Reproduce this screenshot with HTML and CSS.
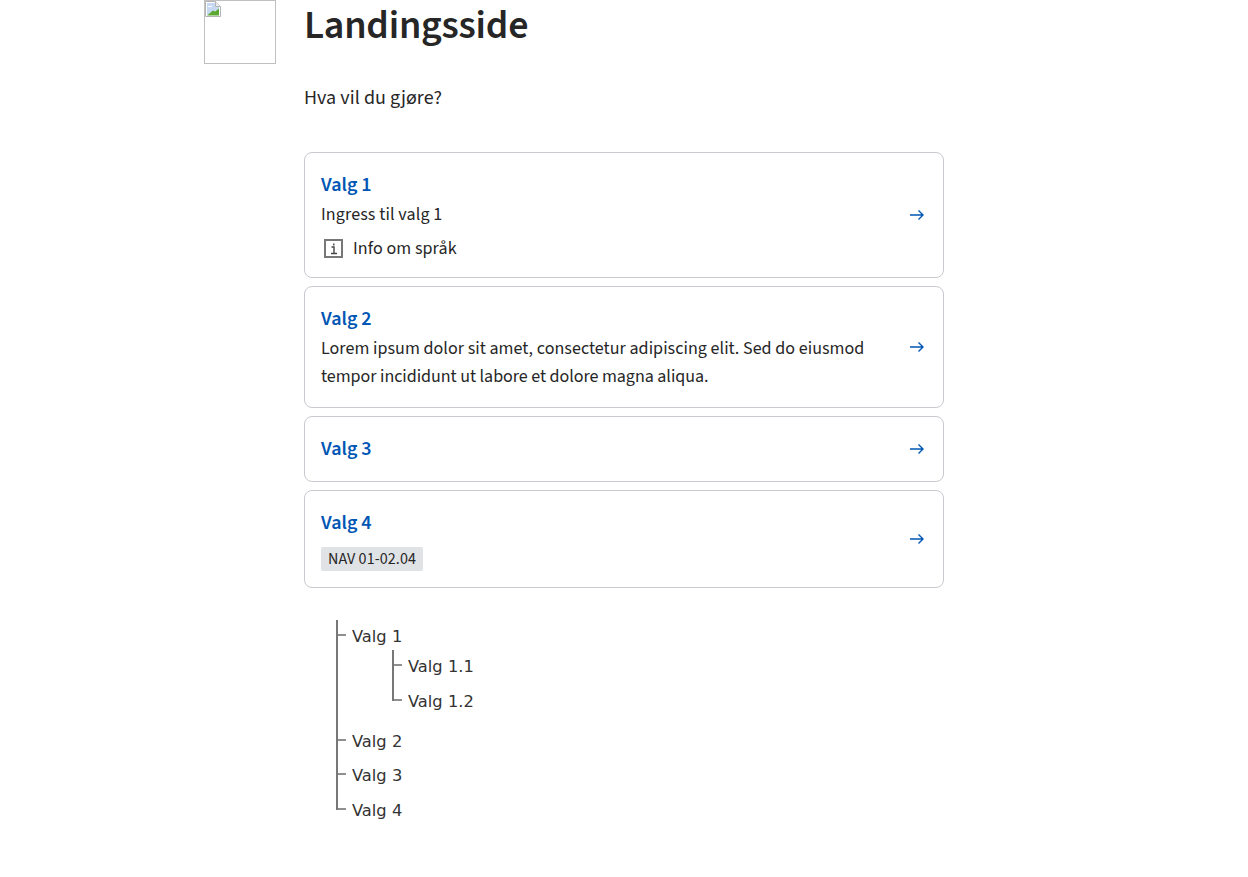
FILE: index.html
```html
<!DOCTYPE html>
<html lang="en">
<head>
    <meta charset="utf-8" />
    <meta name="viewport" content="width=device-width, initial-scale=1.0">
    <title>Landingsside</title>
    <link rel="stylesheet" href="styles.css">
</head>
<body>
    <div class="page">
        <div class="logo">
            <svg class="broken" width="16" height="16" viewBox="0 0 16 16">
                <path d="M.5.5h10l5 5v10H.5z" fill="#fff" stroke="#b4b4b4" />
                <path d="M10.500.5v5h5" fill="#eee" stroke="#b4b4b4" />
                <path d="M2 2h8v4h4v2l-4 2-3 1-5 3z" fill="#c6d8f4" />
                <path d="M2 14.500l6-5 2 1 4-3v7z" fill="#5aa832" />
                <path d="M3 5h4v1H3z" fill="#fff" />
            </svg>
        </div>
        <main class="content">
            <h1>Landingsside</h1>
            <p class="intro">Hva vil du gjøre?</p>

            <div class="cards">
                <a class="card" href="#">
                    <div class="card-body">
                        <div class="card-title">Valg 1</div>
                        <div class="card-text short">Ingress til valg 1</div>
                        <div class="card-info">
                            <svg width="20" height="20" viewBox="0 0 20 20">
                                <rect x="1" y="1" width="17" height="17" fill="none" stroke="#777" stroke-width="2" />
                                <path d="M7.500 8h2.500v6M7 14.500h6M9.800 4.500v2" fill="none" stroke="#444" stroke-width="1.400" />
                            </svg>
                            <span>Info om språk</span>
                        </div>
                    </div>
                    <svg class="arrow" width="14" height="12" viewBox="0 0 14 12"><path d="M0 6h13M8.500 1.500L13 6 8.500 10.500" fill="none" stroke="#0056b4" stroke-width="1.400" /></svg>
                </a>
                <a class="card" href="#">
                    <div class="card-body">
                        <div class="card-title">Valg 2</div>
                        <div class="card-text">Lorem ipsum dolor sit amet, consectetur adipiscing elit. Sed do eiusmod tempor incididunt ut labore et dolore magna aliqua.</div>
                    </div>
                    <svg class="arrow" width="14" height="12" viewBox="0 0 14 12"><path d="M0 6h13M8.500 1.500L13 6 8.500 10.500" fill="none" stroke="#0056b4" stroke-width="1.400" /></svg>
                </a>
                <a class="card" href="#">
                    <div class="card-body">
                        <div class="card-title">Valg 3</div>
                    </div>
                    <svg class="arrow" width="14" height="12" viewBox="0 0 14 12"><path d="M0 6h13M8.500 1.500L13 6 8.500 10.500" fill="none" stroke="#0056b4" stroke-width="1.400" /></svg>
                </a>
                <a class="card" href="#">
                    <div class="card-body">
                        <div class="card-title">Valg 4</div>
                        <span class="tag">NAV 01-02.04</span>
                    </div>
                    <svg class="arrow" width="14" height="12" viewBox="0 0 14 12"><path d="M0 6h13M8.500 1.500L13 6 8.500 10.500" fill="none" stroke="#0056b4" stroke-width="1.400" /></svg>
                </a>
            </div>

            <ul class="tree">
                <li>
                    <div class="tree-label">Valg 1</div>
                    <ul class="tree sub">
                        <li><div class="tree-label">Valg 1.1</div></li>
                        <li><div class="tree-label">Valg 1.2</div></li>
                    </ul>
                </li>
                <li><div class="tree-label">Valg 2</div></li>
                <li><div class="tree-label">Valg 3</div></li>
                <li><div class="tree-label">Valg 4</div></li>
            </ul>
        </main>
    </div>
</body>
</html>
```

FILE: styles.css
```css
body {
    margin: 0;
    font-family: "Source Sans Pro", "Source Sans 3", "Noto Sans", sans-serif;
    color: #262626;
    background: #fff;
}
.page {
    display: flex;
    gap: 28px;
    margin-left: 204px;
}
.logo {
    box-sizing: border-box;
    width: 72px;
    height: 64px;
    border: 1px solid #c0c0c0;
    flex-shrink: 0;
}
.broken {
    display: block;
}
.content {
    width: 640px;
}
h1 {
    margin: 0 0 32px;
    font-size: 40px;
    line-height: 52px;
    font-weight: 600;
    letter-spacing: -0.25px;
}
.intro {
    margin: 0 0 40px;
    font-size: 20px;
    line-height: 28px;
    letter-spacing: 0.06px;
}
.cards {
    display: flex;
    flex-direction: column;
    gap: 8px;
}
.card {
    display: flex;
    align-items: center;
    gap: 16px;
    padding: 16px 19px 16px 16px;
    border: 1px solid #c9c9d0;
    border-radius: 8px;
    color: inherit;
    text-decoration: none;
}
.card-body {
    flex: 1;
}
.card-title {
    font-size: 20px;
    line-height: 32px;
    font-weight: 600;
    color: #0056b4;
}
.card-text {
    font-size: 18px;
    line-height: 28px;
    letter-spacing: -0.04px;
}
.card-text::first-line {
    letter-spacing: 0.04px;
}
.card-text.short::first-line {
    letter-spacing: 0.11px;
}
.card-info {
    display: flex;
    align-items: center;
    gap: 9px;
    height: 26px;
    padding-top: 6px;
    padding-left: 3px;
    font-size: 18px;
    letter-spacing: 0.08px;
}
.card-info svg {
    flex-shrink: 0;
    margin-top: 2px;
}
.arrow {
    flex-shrink: 0;
}
.tag {
    display: block;
    width: fit-content;
    margin-top: 8px;
    padding: 0 7px;
    border-radius: 2px;
    background: #e0e3e6;
    font-size: 16px;
    line-height: 24px;
    letter-spacing: 0.09px;
}
.tree {
    list-style: none;
    margin: 32px 0 0 32px;
    padding: 0;
    font-family: "DejaVu Sans", sans-serif;
    font-size: 16.300px;
    color: #333;
}
.tree.sub {
    margin: -4.670px 0 0 40px;
    padding-bottom: 5.500px;
}
.tree li {
    position: relative;
    padding-left: 16px;
}
.tree li::before {
    content: "";
    position: absolute;
    left: 0;
    top: 0;
    bottom: 0;
    width: 2px;
    background: #777;
}
.tree li:last-child::before {
    bottom: auto;
    height: 16px;
}
.tree li::after {
    content: "";
    position: absolute;
    left: 2px;
    top: 14px;
    width: 8px;
    height: 2px;
    background: #8f8f8f;
}
.tree-label {
    padding: 3px 0 4.670px;
    line-height: 27px;
}
```
